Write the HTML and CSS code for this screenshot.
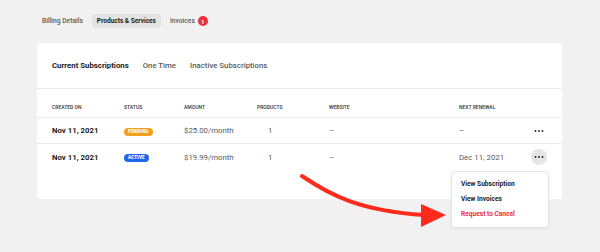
FILE: index.html
```html
<!DOCTYPE html>
<html lang="en">
<head>
  <meta charset="UTF-8">
  <meta name="viewport" content="width=device-width, initial-scale=1.0">
  <title>Products &amp; Services</title>
  <link rel="stylesheet" href="styles.css">
</head>
<body>

  <nav class="page-tabs">
    <a class="page-tab">Billing Details</a>
    <a class="page-tab active">Products &amp; Services</a>
    <a class="page-tab">Invoices <span class="count">1</span></a>
  </nav>

  <section class="card">
    <div class="sub-tabs">
      <a class="sub-tab active">Current Subscriptions</a>
      <a class="sub-tab">One Time</a>
      <a class="sub-tab">Inactive Subscriptions</a>
    </div>

    <div class="table">
      <div class="row head">
        <span>Created On</span>
        <span>Status</span>
        <span>Amount</span>
        <span>Products</span>
        <span>Website</span>
        <span>Next Renewal</span>
        <span></span>
      </div>
      <div class="row">
        <span class="date">Nov 11, 2021</span>
        <span><em class="badge pending">Pending</em></span>
        <span>$25.00/month</span>
        <span class="qty">1</span>
        <span>–</span>
        <span>–</span>
        <span class="more">
          <svg width="10" height="4" viewBox="0 0 10 4"><circle cx="1.5" cy="2" r="0.9"/><circle cx="5" cy="2" r="0.9"/><circle cx="8.5" cy="2" r="0.9"/></svg>
        </span>
      </div>
      <div class="row">
        <span class="date">Nov 11, 2021</span>
        <span><em class="badge active">Active</em></span>
        <span>$19.99/month</span>
        <span class="qty">1</span>
        <span>–</span>
        <span>Dec 11, 2021</span>
        <span class="more open">
          <svg width="10" height="4" viewBox="0 0 10 4"><circle cx="1.5" cy="2" r="0.9"/><circle cx="5" cy="2" r="0.9"/><circle cx="8.5" cy="2" r="0.9"/></svg>
        </span>
      </div>
    </div>

    <!-- actions menu for the second row -->
    <div class="menu">
      <a>View Subscription</a>
      <a>View Invoices</a>
      <a class="danger">Request to Cancel</a>
    </div>
  </section>

  <svg class="pointer" width="600" height="252" viewBox="0 0 600 252">
    <path d="M302 176 C 330 195, 360 211, 424 215" fill="none" stroke="#ff2a1c" stroke-width="4" stroke-linecap="round"/>
    <polygon points="421,204 446,215 421,227" fill="#ff2a1c"/>
  </svg>

</body>
</html>
```

FILE: styles.css
```css
:root {
  --bg: #f1f1f1;
  --text: #1c1c1c;
  --muted: #5a5a5a;
  --line: #ececec;
  --red: #ec3038;
}
* {
  box-sizing: border-box;
}
body {
  margin: 0;
  font-family: Roboto, "Noto Sans", sans-serif;
  background: var(--bg);
  color: var(--text);
  position: relative;
  height: 252px;
  overflow: hidden;
}
a {
  cursor: pointer;
}
.page-tabs {
  display: flex;
  gap: 4px;
  padding: 14px 37px 0;
  height: 43px;
  align-items: flex-start;
}
.page-tab {
  display: flex;
  align-items: center;
  gap: 3px;
  height: 14px;
  padding: 0 5px;
  border-radius: 3px;
  font-size: 6.7px;
  font-weight: 500;
  color: var(--muted);
}
.page-tab.active {
  background: #e3e3e3;
  color: var(--text);
  font-size: 6.5px;
  font-weight: 700;
}
.count {
  display: inline-flex;
  align-items: center;
  justify-content: center;
  width: 10px;
  height: 10px;
  border-radius: 50%;
  background: var(--red);
  color: #fff;
  font-size: 6px;
  font-weight: 700;
}
.card {
  position: relative;
  margin: 0 38px 0 37px;
  height: 156px;
  background: #fff;
  border-radius: 3px;
}
.sub-tabs {
  display: flex;
  gap: 14px;
  height: 46px;
  align-items: center;
  padding: 0 15px;
  border-bottom: 1px solid var(--line);
}
.sub-tab {
  font-size: 7.8px;
  font-weight: 500;
  color: var(--muted);
}
.sub-tab.active {
  color: var(--text);
  font-weight: 700;
}
.row {
  display: grid;
  grid-template-columns: 72px 60px 73px 72px 130px 72px 16px;
  align-items: center;
  height: 26px;
  padding: 0 15px;
  border-bottom: 1px solid var(--line);
  font-size: 7.8px;
  color: var(--muted);
}
.row:last-child {
  border-bottom: none;
}
.row.head {
  height: 29px;
  align-items: end;
  padding-bottom: 7px;
  font-size: 5px;
  font-weight: 500;
  text-transform: uppercase;
  color: #333;
}
.date {
  font-weight: 700;
  color: var(--text);
}
.qty {
  padding-left: 11px;
}
.badge {
  display: inline-block;
  padding: 0 4px;
  height: 8px;
  line-height: 8px;
  border-radius: 4px;
  font-style: normal;
  font-size: 4.5px;
  font-weight: 900;
  text-transform: uppercase;
  letter-spacing: 0.2px;
  color: #fff;
}
.badge.pending {
  background: #f0a020;
}
.badge.active {
  background: #1f66ec;
}
.more {
  display: flex;
  align-items: center;
  justify-content: center;
  width: 16px;
  height: 16px;
  border-radius: 50%;
  fill: var(--text);
}
.more.open {
  background: #e6e6e6;
}
.menu {
  position: absolute;
  top: 128px;
  left: 414px;
  width: 98px;
  padding: 8px 9px;
  display: flex;
  flex-direction: column;
  gap: 6px;
  background: #fff;
  border: 1px solid #e4e4e4;
  border-radius: 4px;
  box-shadow: 0 1px 3px rgba(0, 0, 0, 0.06);
  z-index: 2;
}
.menu a {
  font-size: 6.6px;
  font-weight: 700;
  line-height: 9px;
  color: var(--text);
}
.menu a.danger {
  color: var(--red);
}
.pointer {
  position: absolute;
  top: 0;
  left: 0;
  pointer-events: none;
  z-index: 3;
}
```
